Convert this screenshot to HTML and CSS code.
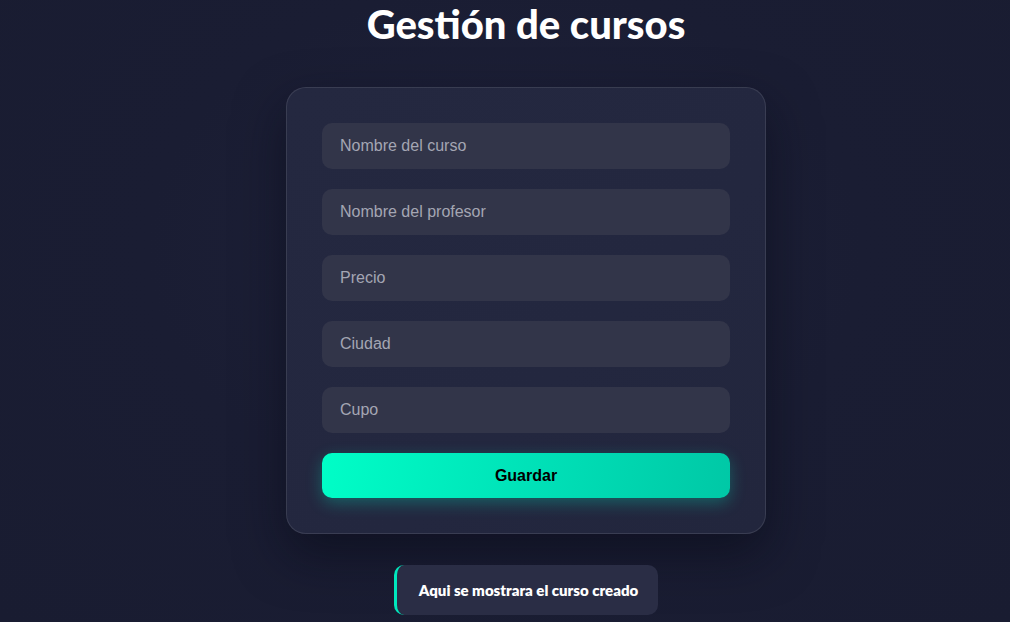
FILE: index.html
```html
<!DOCTYPE html>
<html lang="es">
<head>
<meta charset="utf-8">
<title>Gestión de cursos</title>
<link rel="stylesheet" href="styles.css">
</head>
<body>
<main class="page">
  <h1 class="title">Gestión de cursos</h1>
  <form class="card">
    <input class="field" type="text" placeholder="Nombre del curso">
    <input class="field" type="text" placeholder="Nombre del profesor">
    <input class="field" type="text" placeholder="Precio">
    <input class="field" type="text" placeholder="Ciudad">
    <input class="field" type="text" placeholder="Cupo">
    <button class="save" type="button">Guardar</button>
  </form>
  <div class="result">Aqui se mostrara el curso creado</div>
</main>
</body>
</html>
```
FILE: styles.css
```css
html, body {
  margin: 0;
  height: 100%;
}
body {
  background: radial-gradient(ellipse at 50% 40%, #1e2139 0%, #1a1d33 50%, #191c31 100%);
  background-color: #1a1d33;
  overflow: hidden;
  font-family: "Liberation Sans", Arial, sans-serif;
}
.page {
  display: flex;
  flex-direction: column;
  align-items: center;
  padding-left: 42px;
}
.title {
  margin: 0;
  padding-top: 1px;
  font-family: "Lato", "Inter", sans-serif;
  font-weight: 900;
  font-size: 40px;
  line-height: 46px;
  color: #ffffff;
  letter-spacing: 0;
}
.card {
  margin-top: 40px;
  width: 408px;
  padding: 35px;
  display: flex;
  flex-direction: column;
  gap: 20px;
  background: linear-gradient(135deg, #242840 0%, #23273f 60%, #22263d 100%);
  border: 1px solid rgba(255, 255, 255, 0.1);
  border-radius: 20px;
  box-shadow: 0 20px 50px rgba(8, 10, 22, 0.55);
}
.field {
  box-sizing: border-box;
  width: 100%;
  height: 46px;
  padding: 0 18px;
  border: none;
  border-radius: 10px;
  background: #323549;
  font-family: "Liberation Sans", Arial, sans-serif;
  font-size: 16px;
  color: #e0e2ea;
  outline: none;
}
.field::placeholder {
  color: #a4a6b3;
}
.save {
  height: 45px;
  border: none;
  border-radius: 10px;
  background: linear-gradient(100deg, #00fec7 0%, #00e2b8 50%, #00c8a6 100%);
  font-family: "Liberation Sans", Arial, sans-serif;
  font-weight: 700;
  font-size: 16px;
  color: #000000;
  box-shadow: 0 5px 16px rgba(0, 230, 190, 0.3);
  cursor: pointer;
}
.result {
  margin-top: 31px;
  padding: 15px 20px 15px 22px;
  border-left: 3px solid #00e8bd;
  border-radius: 10px;
  background: #2a2d45;
  font-family: "Lato", "Inter", sans-serif;
  font-weight: 800;
  font-size: 15px;
  line-height: 20px;
  color: #ffffff;
}
```
